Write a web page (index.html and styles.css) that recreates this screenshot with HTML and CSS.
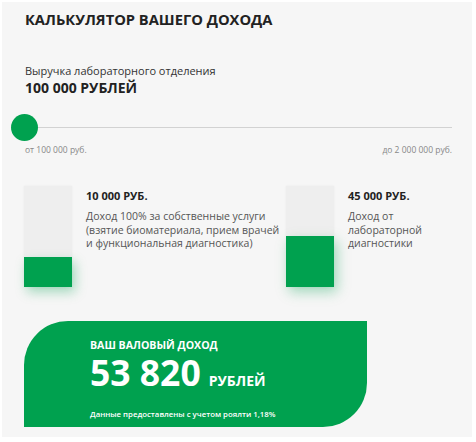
FILE: index.html
```html
<!DOCTYPE html>
<html lang="ru">
<head>
<meta charset="utf-8">
<title>Калькулятор</title>
<link rel="stylesheet" href="styles.css">
</head>
<body>
<div class="panel">
  <h1 class="title">КАЛЬКУЛЯТОР ВАШЕГО ДОХОДА</h1>
  <div class="label">Выручка лабораторного отделения</div>
  <div class="value">100 000 РУБЛЕЙ</div>
  <div class="slider"><span class="thumb"></span></div>
  <div class="range">
    <span>от 100 000 руб.</span>
    <span>до 2 000 000 руб.</span>
  </div>
  <div class="cols">
    <div class="col">
      <div class="bar"><div class="fill" style="height:30px"></div></div>
      <div class="info">
        <div class="sum">10 000 РУБ.</div>
        <p class="desc">Доход 100% за собственные услуги<br>(взятие биоматериала, прием врачей<br>и функциональная диагностика)</p>
      </div>
    </div>
    <div class="col">
      <div class="bar"><div class="fill" style="height:51px"></div></div>
      <div class="info">
        <div class="sum">45 000 РУБ.</div>
        <p class="desc">Доход от<br>лабораторной<br>диагностики</p>
      </div>
    </div>
  </div>
  <div class="card">
    <div class="card-title">ВАШ ВАЛОВЫЙ ДОХОД</div>
    <div class="total"><span class="num">53 820</span><span class="unit">РУБЛЕЙ</span></div>
    <div class="note">Данные предоставлены с учетом роялти 1,18%</div>
  </div>
</div>
</body>
</html>
```
FILE: styles.css
```css
html, body { background: #ffffff; }
body {
  margin: 2px 4px 5px 2px;
  font-family: "Open Sans", "Noto Sans", sans-serif;
}
.panel {
  background: #f6f6f6;
  height: 435px;
  box-sizing: border-box;
  padding: 7px 20px 0 23px;
}
.title {
  margin: 0;
  font-size: 14.7px;
  line-height: 20px;
  font-weight: 700;
  color: #222;
}
.label {
  margin-top: 33px;
  font-size: 11px;
  line-height: 17px;
  color: #333;
}
.value {
  font-size: 14px;
  line-height: 18px;
  font-weight: 700;
  color: #222;
}
.slider {
  margin-top: 16px;
  height: 28px;
  display: flex;
  align-items: center;
  background: linear-gradient(#d2d2d2, #d2d2d2) no-repeat left center / 100% 1px;
}
.thumb {
  width: 27px;
  height: 27px;
  border-radius: 50%;
  background: #00a14f;
  margin-left: -14px;
}
.range {
  margin-top: 3px;
  display: flex;
  justify-content: space-between;
  font-size: 8.5px;
  line-height: 12px;
  color: #888;
}
.cols {
  margin-top: 30px;
  margin-left: -1px;
  display: grid;
  grid-template-columns: 262px 1fr;
}
.col {
  display: flex;
  gap: 14px;
  align-items: flex-start;
}
.bar {
  width: 48px;
  height: 101px;
  flex: none;
  background: #eeeeee;
  box-shadow: 0 0 2px rgba(0,0,0,0.06);
  display: flex;
  flex-direction: column;
  justify-content: flex-end;
}
.fill {
  background: #00a14f;
  box-shadow: 3px 5px 12px rgba(0,161,79,0.35);
}
.info { padding-top: 2px; }
.sum {
  font-size: 11px;
  line-height: 15px;
  font-weight: 700;
  color: #222;
}
.desc {
  margin: 7px 0 0;
  font-size: 10.5px;
  line-height: 13.5px;
  color: #555;
  white-space: nowrap;
}
.card {
  margin-top: 34px;
  margin-left: -1px;
  width: 343px;
  height: 106px;
  box-sizing: border-box;
  padding: 17px 0 0 66px;
  background: #00a14f;
  border-radius: 44px 0 44px 0;
  color: #fff;
}
.card-title {
  font-size: 10.6px;
  line-height: 15px;
  font-weight: 700;
}
.total {
  margin-top: 2px;
  line-height: 34px;
}
.num {
  font-size: 35.5px;
  font-weight: 700;
}
.unit {
  margin-left: 8px;
  font-size: 14px;
  font-weight: 700;
}
.note {
  margin-top: 10px;
  font-size: 7.8px;
  line-height: 12px;
  font-weight: 600;
}
```
